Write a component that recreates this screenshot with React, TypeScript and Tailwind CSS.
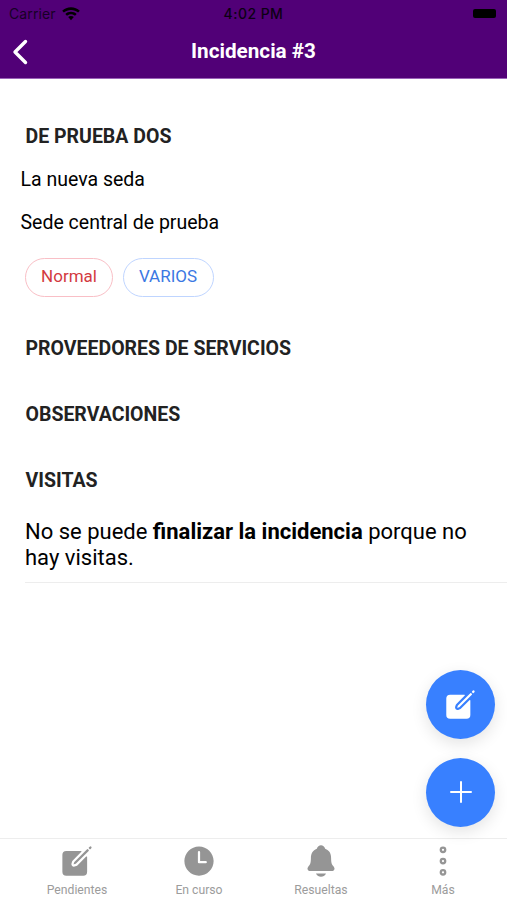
import type { ReactNode } from 'react';
import { IoCreate, IoEllipsisVerticalOutline, IoNotifications, IoTime } from 'react-icons/io5';
import type { IconType } from 'react-icons';

interface Tab {
  label: string;
  icon: IconType;
}

const tabs: Tab[] = [
  { label: 'Pendientes', icon: IoCreate },
  { label: 'En curso', icon: IoTime },
  { label: 'Resueltas', icon: IoNotifications },
  { label: 'Más', icon: IoEllipsisVerticalOutline },
];

function StatusBar() {
  return (
    <div className="grid h-[27px] grid-cols-3 items-center pr-[11px] pl-[9px] text-black">
      <div className="flex items-center gap-[6px]">
        <span className="font-[Inter,sans-serif] text-[14px] leading-none tracking-[0.1px] text-[#170026]">Carrier</span>
        <svg viewBox="0 0 18 14" className="h-[14px] w-[18px]" fill="currentColor">
          <path d="M9 .3C5.6.3 2.5 1.600.2 3.700l1.700 1.900C3.800 3.900 6.300 2.900 9 2.900s5.200 1 7.100 2.700l1.700-1.900C15.500 1.600 12.400.3 9 .3z" />
          <path d="M9 4.700c-2.200 0-4.200.8-5.700 2.200L5 8.700c1-.9 2.500-1.500 4-1.500s3 .6 4 1.500l1.700-1.800C13.200 5.500 11.200 4.700 9 4.700z" />
          <path d="M9 9c-1.100 0-2.100.4-2.800 1.100L9 13.300l2.800-3.200C11.100 9.400 10.100 9 9 9z" />
        </svg>
      </div>
      <span className="pl-[2px] text-center font-[Inter,sans-serif] text-[14px] leading-none font-medium tracking-[0.45px] text-[#0c0014]">
        4:02 PM
      </span>
      <div className="h-[9px] w-[23px] justify-self-end rounded-[2px] bg-black" />
    </div>
  );
}

function Header() {
  return (
    <header className="h-[79px] shrink-0 border-b border-[#9a62b8] bg-[#510077]">
      <StatusBar />
      <div className="grid h-[50px] grid-cols-[60px_1fr_60px] items-center text-white">
        <button className="pl-[12px]" aria-label="Volver">
          <svg viewBox="0 0 18 28" className="h-[28px] w-[18px]" fill="none" stroke="currentColor" strokeWidth="3.4" strokeLinecap="round" strokeLinejoin="round">
            <path d="M13.500 3.500L3 14l10.500 10.500" />
          </svg>
        </button>
        <h1 className="text-center text-[20.7px] font-bold">Incidencia #3</h1>
      </div>
    </header>
  );
}

function SectionTitle({ children }: { children: ReactNode }) {
  return <h2 className="h-[66px] pl-[25.5px] text-[19.5px] leading-[66px] font-bold text-[#222222]">{children}</h2>;
}

function Fab({ label, children }: { label: string; children: ReactNode }) {
  return (
    <button
      aria-label={label}
      className="flex size-[69px] items-center justify-center rounded-full bg-[#3880ff] text-white shadow-[0_5px_16px_rgba(0,0,0,0.11)]"
    >
      {children}
    </button>
  );
}

export default function App() {
  return (
    <div className="relative flex h-[900px] w-[507px] flex-col overflow-hidden bg-white font-[Roboto,sans-serif] text-black">
      <Header />

      <main className="flex-1 pt-[25px]">
        <SectionTitle>DE PRUEBA DOS</SectionTitle>
        <div className="-mt-[12px] pl-[20.5px] text-[19.5px] leading-[43px]">
          <p>La nueva seda</p>
          <p>Sede central de prueba</p>
        </div>
        <div className="mt-[14px] mb-[19px] flex gap-[10px] pl-[25px]">
          <span className="flex h-[39px] w-[88px] items-center justify-center rounded-full border border-[#f9bfc6] pb-[2px] text-[17px] text-[#d33a3f]">
            Normal
          </span>
          <span className="flex h-[39px] w-[91px] items-center justify-center rounded-full border border-[#bfd5ff] pr-[1px] pb-[2px] text-[17px] text-[#3b78e3]">
            VARIOS
          </span>
        </div>
        <SectionTitle>PROVEEDORES DE SERVICIOS</SectionTitle>
        <SectionTitle>OBSERVACIONES</SectionTitle>
        <SectionTitle>VISITAS</SectionTitle>
        <p className="ml-[25px] border-b border-[#ededed] pt-[5px] pr-[20px] pb-[11px] text-[22px] leading-[26px]">
          No se puede <b className="font-bold">finalizar la incidencia</b> porque no hay visitas.
        </p>
      </main>

      <div className="absolute right-[12px] bottom-[73px] flex flex-col gap-[19px]">
        <Fab label="Editar">
          <IoCreate className="size-[35px]" />
        </Fab>
        <Fab label="Añadir">
          <svg viewBox="0 0 22 22" className="mb-[2px] size-[22px]" stroke="currentColor" strokeWidth="2" strokeLinecap="round">
            <path d="M11 1v20M1 11h20" />
          </svg>
        </Fab>
      </div>

      <nav className="grid h-[62px] shrink-0 grid-cols-4 border-t border-[#ededed] bg-white pr-[3px] pl-[16px] text-[#959595]">
        {tabs.map(({ label, icon: Icon }) => (
          <button key={label} className="flex flex-col items-center pt-[4px]">
            <Icon className="size-[36px]" />
            <span className="mt-[4px] text-[12.2px] leading-[14px] text-[#9c9c9c]">{label}</span>
          </button>
        ))}
      </nav>
    </div>
  );
}
